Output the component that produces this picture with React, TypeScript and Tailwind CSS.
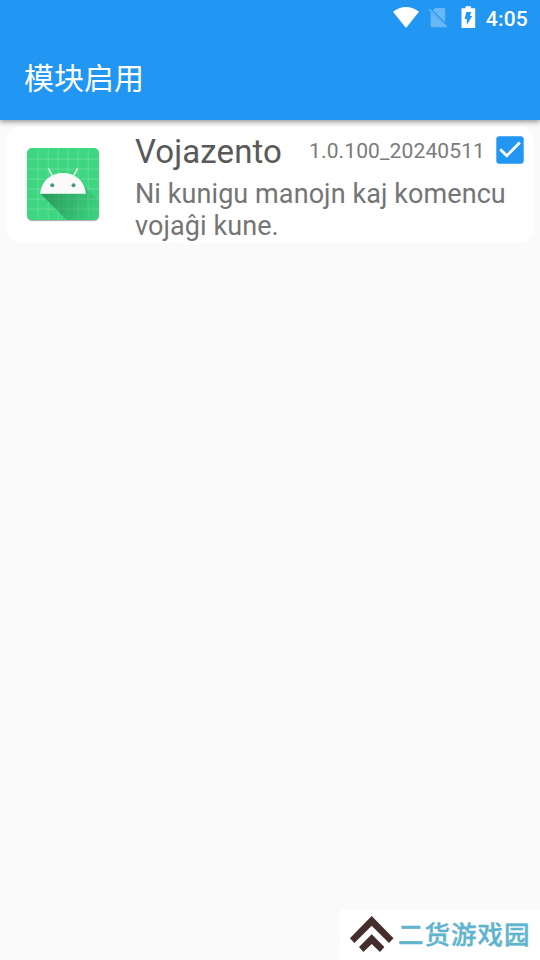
const gridLines = [10, 20, 30, 40, 50, 60];

const StatusBar = () => (
  <div className="flex h-9 items-center justify-end pr-3 text-white">
    <svg className="h-9 w-[26px]" viewBox="0 0 26 36" fill="currentColor">
      <path d="M0 11.8 C7.5 5.4 18.5 5.4 26 11.8 L13 28 Z" />
    </svg>
    <svg className="ml-[9px] h-9 w-5" viewBox="0 0 20 36" fill="currentColor" opacity="0.32">
      <path d="M7.5 8 H15.7 Q17.2 8 17.2 9.5 V22.6 L4.8 10.2 Z M2.7 12.2 L17.4 26.9 Q17 27.3 16 27.3 H4.2 Q2.7 27.3 2.7 25.8 Z M0.8 9.8 L1.9 8.7 L19.3 26.6 L18.1 27.9 Z" />
    </svg>
    <svg className="ml-[13px] h-9 w-[15px]" viewBox="0 0 15 36" fill="currentColor">
      <path
        fillRule="evenodd"
        d="M4.5 6.3 H10 V8.3 H14.2 V28 H0.5 V8.3 H4.5 Z M5.4 11.9 H10.2 L8.9 16 H11.2 L5.8 25 V18.9 H3.6 Z"
      />
    </svg>
    <span className="ml-2.5 pt-0.5 text-[21px] leading-none font-medium tracking-[0.2px]">4:05</span>
  </div>
);

const Header = () => (
  <header className="relative z-10 h-[120px] bg-[#2196f3] shadow-[0_2px_5px_rgba(0,0,0,0.4)]">
    <StatusBar />
    <h1 className="flex h-[81px] items-center pl-6 font-['Noto_Sans_CJK_SC',sans-serif] text-[30px] font-normal text-white">
      模块启用
    </h1>
  </header>
);

const AndroidIcon = () => (
  <svg className="h-[76px] w-[76px]" viewBox="-2 -2 76 76">
    <defs>
      <clipPath id="tile">
        <rect width="72" height="72" rx="5" />
      </clipPath>
      <linearGradient id="cast" gradientUnits="userSpaceOnUse" x1="20" y1="48" x2="72" y2="68">
        <stop offset="0" stopColor="#228650" stopOpacity="0.7" />
        <stop offset="0.5" stopColor="#289a5b" stopOpacity="0.5" />
        <stop offset="1" stopColor="#2fae68" stopOpacity="0.1" />
      </linearGradient>
    </defs>
    <rect x="-0.5" y="0.5" width="73" height="72.5" rx="5.5" fill="#000" opacity="0.12" />
    <rect y="1.3" width="72" height="72" rx="5" fill="#000" opacity="0.2" />
    <g clipPath="url(#tile)">
      <rect width="72" height="72" fill="#3dd681" />
      {gridLines.map((n) => (
        <path key={n} d={`M${n + 1.2} 0 V72 M0 ${n + 1.2} H72`} stroke="#fff" strokeOpacity="0.16" strokeWidth="1.2" />
      ))}
      <path d="M13.3 45.5 L39.8 72 H72 V53 L57.5 38.5 L58.5 45.5 Z" fill="url(#cast)" />
    </g>
    <path d="M13.2 45.7 C15.5 18 56.5 18 58.8 45.7 Z" fill="#fafafa" />
    <path d="M21.8 21 L25.7 28.3 M50.2 21 L46.3 28.3" stroke="#d3f5e1" strokeWidth="1.7" strokeLinecap="round" />
    <circle cx="25.3" cy="37.3" r="2" fill="#459a70" />
    <circle cx="46.5" cy="37.3" r="2" fill="#459a70" />
  </svg>
);

const ModuleCard = () => (
  <section className="mx-1.5 mt-1.5 flex h-[117px] rounded-[15px] bg-white">
    <div className="w-[129px] shrink-0 pt-5 pl-[19px]">
      <AndroidIcon />
    </div>
    <div className="min-w-0 flex-1">
      <div className="mb-px flex h-[51px] items-center pr-[10px]">
        <h2 className="text-[33px] leading-none font-normal tracking-[0.1px] whitespace-nowrap text-[#595959]">
          Vojazento
        </h2>
        <span className="ml-auto text-[21px] leading-none tracking-[0.12px] whitespace-nowrap text-[#7b7b7b]">
          1.0.100_20240511
        </span>
        <svg className="ml-[11px] h-7 w-7 shrink-0 -translate-y-0.5" viewBox="0 0 28 28">
          <rect x="0.3" y="0.3" width="27.4" height="27.4" rx="3" fill="#2196f3" />
          <path d="M4.2 13.3 L10.8 19.8 L23.8 6.6" fill="none" stroke="#fff" strokeWidth="2.8" />
        </svg>
      </div>
      <p className="text-[27px] leading-8 tracking-[0.08px] text-[#757575]">
        Ni kunigu manojn kaj komencu
        <br />
        vojaĝi kune.
      </p>
    </div>
  </section>
);

const Watermark = () => (
  <footer className="mt-auto ml-auto flex h-[50px] w-[200px] items-center bg-white">
    <svg className="ml-[9px] h-[50px] w-[46px] shrink-0" viewBox="349 910 46 50" fill="#432d2d">
      <path d="M371.7 916 L393.5 938.3 L389 943 L371.7 925.7 L354.4 943 L349.9 938.3 Z" />
      <path d="M371.7 934.3 L384.4 947 L380 952 L371.7 944 L363.4 952 L359 947 Z" />
    </svg>
    <span className="ml-[3px] pb-[5px] font-['Noto_Sans_CJK_SC',sans-serif] text-[25.5px] leading-none font-medium tracking-[1px] whitespace-nowrap text-[#60b4ce] [-webkit-text-stroke:0.4px_#60b4ce]">
      二货游戏园
    </span>
  </footer>
);

const App = () => (
  <main className="flex h-[960px] w-[540px] flex-col overflow-hidden bg-[#fafafa] font-[Roboto,sans-serif]">
    <Header />
    <ModuleCard />
    <Watermark />
  </main>
);

export default App;
